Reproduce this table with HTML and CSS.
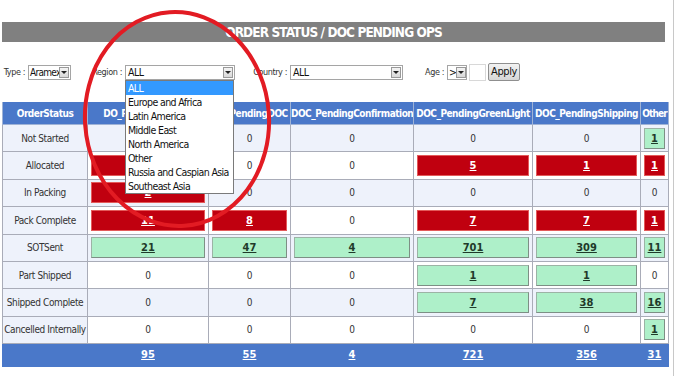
FILE: index.html
```html
<!DOCTYPE html>
<html>
<head>
<meta charset="utf-8">
<link rel="stylesheet" href="styles.css">
</head>
<body>
<div class="page">
  <div class="title">ORDER STATUS / DOC PENDING OPS</div>
  <div class="filters">
    <span class="lbl lbl-type">Type :</span>
    <span class="sel sel-type"><span class="val">Aramex</span><span class="arrow"></span></span>
    <span class="lbl lbl-region">Region :</span>
    <span class="sel sel-region"><span class="val">ALL</span><span class="arrow"></span>
      <ul class="list">
        <li class="on">ALL</li>
        <li>Europe and Africa</li>
        <li>Latin America</li>
        <li>Middle East</li>
        <li>North America</li>
        <li>Other</li>
        <li>Russia and Caspian Asia</li>
        <li>Southeast Asia</li>
      </ul>
    </span>
    <span class="lbl lbl-country">Country :</span>
    <span class="sel sel-country"><span class="val">ALL</span><span class="arrow"></span></span>
    <span class="lbl lbl-age">Age :</span>
    <span class="sel sel-age"><span class="val">&gt;</span><span class="arrow"></span></span>
    <span class="inp"></span>
    <span class="btn">Apply</span>
  </div>
  <table class="grid">
    <colgroup>
      <col class="c1"><col class="c2"><col class="c3"><col class="c4"><col class="c5"><col class="c6"><col class="c7">
    </colgroup>
    <thead>
      <tr><th>OrderStatus</th><th>DO_PendingPicking</th><th>DO_PendingDOC</th><th>DOC_PendingConfirmation</th><th>DOC_PendingGreenLight</th><th>DOC_PendingShipping</th><th class="oth">Other</th></tr>
    </thead>
    <tbody>
      <tr class="alt"><td class="st">Not Started</td><td>0</td><td>0</td><td>0</td><td>0</td><td>0</td><td class="b"><a class="g">1</a></td></tr>
      <tr><td class="st">Allocated</td><td class="b"><a class="r">61</a></td><td>0</td><td>0</td><td class="b"><a class="r">5</a></td><td class="b"><a class="r">1</a></td><td class="b"><a class="r">1</a></td></tr>
      <tr class="alt"><td class="st">In Packing</td><td class="b"><a class="r">2</a></td><td>0</td><td>0</td><td>0</td><td>0</td><td>0</td></tr>
      <tr><td class="st">Pack Complete</td><td class="b"><a class="r">11</a></td><td class="b"><a class="r">8</a></td><td>0</td><td class="b"><a class="r">7</a></td><td class="b"><a class="r">7</a></td><td class="b"><a class="r">1</a></td></tr>
      <tr class="alt"><td class="st">SOTSent</td><td class="b"><a class="g">21</a></td><td class="b"><a class="g">47</a></td><td class="b"><a class="g">4</a></td><td class="b"><a class="g">701</a></td><td class="b"><a class="g">309</a></td><td class="b"><a class="g">11</a></td></tr>
      <tr><td class="st">Part Shipped</td><td>0</td><td>0</td><td>0</td><td class="b"><a class="g">1</a></td><td class="b"><a class="g">1</a></td><td>0</td></tr>
      <tr class="alt"><td class="st">Shipped Complete</td><td>0</td><td>0</td><td>0</td><td class="b"><a class="g">7</a></td><td class="b"><a class="g">38</a></td><td class="b"><a class="g">16</a></td></tr>
      <tr><td class="st">Cancelled Internally</td><td>0</td><td>0</td><td>0</td><td>0</td><td>0</td><td class="b"><a class="g">1</a></td></tr>
    </tbody>
    <tfoot>
      <tr><td></td><td><a>95</a></td><td><a>55</a></td><td><a>4</a></td><td><a>721</a></td><td><a>356</a></td><td><a>31</a></td></tr>
    </tfoot>
  </table>
  <svg class="ring" width="200" height="230" viewBox="0 0 200 230">
    <ellipse cx="100" cy="115" rx="92" ry="107" fill="none" stroke="#e21b23" stroke-width="4" transform="rotate(-4 100 115)"/>
  </svg>
</div>
</body>
</html>
```
FILE: styles.css
```css
html, body { margin: 0; padding: 0; background: #fff; }
body {
  font-family: "DejaVu Sans", "Liberation Sans", sans-serif;
  font-stretch: condensed;
  font-size: 10px;
  color: #222;
}
.page {
  position: relative;
  width: 674px;
  height: 376px;
  border-right: 1px solid #c8c8c8;
  padding-top: 22px;
  box-sizing: border-box;
  overflow: hidden;
}
.title {
  margin-left: 2px;
  width: 663px;
  height: 20px;
  line-height: 21px;
  background: #808080;
  color: #fff;
  font-weight: bold;
  font-size: 13.5px;
  letter-spacing: -0.9px;
  text-align: center;
}
.filters {
  display: flex;
  align-items: center;
  height: 18px;
  margin-top: 21px;
  padding-left: 3px;
  font-size: 9px;
  color: #333;
}
.lbl {
  flex: none;
  display: flex;
  justify-content: flex-end;
  white-space: nowrap;
  letter-spacing: -0.4px;
  padding-right: 3px;
  box-sizing: border-box;
}
.lbl-type { width: 25px; }
.lbl-region { margin-left: 22px; width: 32px; }
.lbl-country { margin-left: 23px; width: 32px; }
.lbl-age { margin-left: 22px; width: 22px; }
.sel {
  flex: none;
  position: relative;
  display: flex;
  align-items: center;
  height: 15px;
  border: 1px solid #a5a5a5;
  background: #fff;
  font-size: 10.5px;
  color: #111;
  box-sizing: border-box;
}
.sel .val { flex: 1; padding-left: 2px; line-height: 15px; letter-spacing: -0.5px; white-space: nowrap; overflow: hidden; }
.sel .arrow {
  flex: none;
  width: 10px;
  height: 11px;
  margin-right: 1px;
  border: 1px solid #999;
  background: linear-gradient(#f4f4f4, #d8d8d8);
  position: relative;
  box-sizing: border-box;
}
.sel .arrow::after {
  content: "";
  position: absolute;
  left: 1px;
  top: 3px;
  border-left: 3px solid transparent;
  border-right: 3px solid transparent;
  border-top: 3px solid #222;
}
.sel-type { width: 43px; }
.sel-type .val { padding-left: 1px; font-size: 10px; letter-spacing: -0.7px; }
.sel-region { width: 110px; }
.sel-country { width: 113px; }
.sel-age { width: 20px; }
.sel-age .val { padding-left: 1px; overflow: visible; }
.inp {
  flex: none;
  width: 17px;
  height: 17px;
  margin-left: 2px;
  border: 1px solid #d8d8d8;
  background: #fff;
  box-sizing: border-box;
}
.btn {
  flex: none;
  margin-left: 2px;
  width: 32px;
  height: 18px;
  line-height: 16px;
  text-align: center;
  border: 1px solid #8f8f8f;
  border-radius: 2px;
  background: linear-gradient(#f2f2f2, #d6d6d6);
  font-size: 11px;
  letter-spacing: -0.4px;
  color: #111;
  box-sizing: border-box;
}
.list {
  position: absolute;
  left: -1px;
  top: 14px;
  width: 109px;
  margin: 0;
  padding: 0;
  list-style: none;
  background: #fff;
  border: 1px solid #7a7a7a;
  box-sizing: border-box;
  z-index: 5;
  font-size: 10.5px;
  letter-spacing: -0.6px;
  color: #111;
}
.list li { height: 14px; line-height: 14px; padding-left: 2px; white-space: nowrap; }
.list li.on { background: #3399ff; color: #fff; }
.grid {
  margin-top: 21px;
  margin-left: 2px;
  width: 666px;
  border-collapse: collapse;
  table-layout: fixed;
  font-size: 10px;
}
.c1 { width: 85px; }
.c2 { width: 121px; }
.c3 { width: 82px; }
.c4 { width: 123px; }
.c5 { width: 119px; }
.c6 { width: 108px; }
.c7 { width: 28px; }
.grid th {
  height: 22px;
  background: #4a78c9;
  color: #fff;
  font-weight: bold;
  border: 1px solid #9fb3d6;
  border-top: none;
  padding: 0;
  letter-spacing: -0.5px;
  white-space: nowrap;
  overflow: hidden;
}
.grid th.oth { letter-spacing: -0.9px; }
.grid td {
  height: 26.4px;
  border: 1px solid #a9acb8;
  text-align: center;
  padding: 0;
  background: #fff;
  color: #333;
  white-space: nowrap;
  overflow: hidden;
}
.grid td.st { letter-spacing: -0.4px; }
.grid tr.alt td { background: #eef2fb; }
.grid td.st { background: #eef2fb; }
.grid td.b { padding: 0 3px; }
.grid a {
  display: block;
  height: 21px;
  line-height: 19px;
  font-weight: bold;
  font-size: 11px;
  text-decoration: underline;
  box-sizing: border-box;
}
.grid a.r {
  background: #c0000f;
  color: #fff;
  border: 1px solid #e35a5a;
}
.grid a.g {
  background: #aef0c9;
  color: #1f3a2a;
  border: 1px solid #9cb3a5;
  border-right-color: #7d8f85;
  border-bottom-color: #7d8f85;
}
.grid tfoot td {
  height: 22px;
  background: #4a78c9;
  border: 1px solid #4a78c9;
}
.grid tfoot a { color: #fff; height: auto; line-height: 22px; }
.ring {
  position: absolute;
  left: 77px;
  top: 4px;
  z-index: 6;
  pointer-events: none;
}
```
